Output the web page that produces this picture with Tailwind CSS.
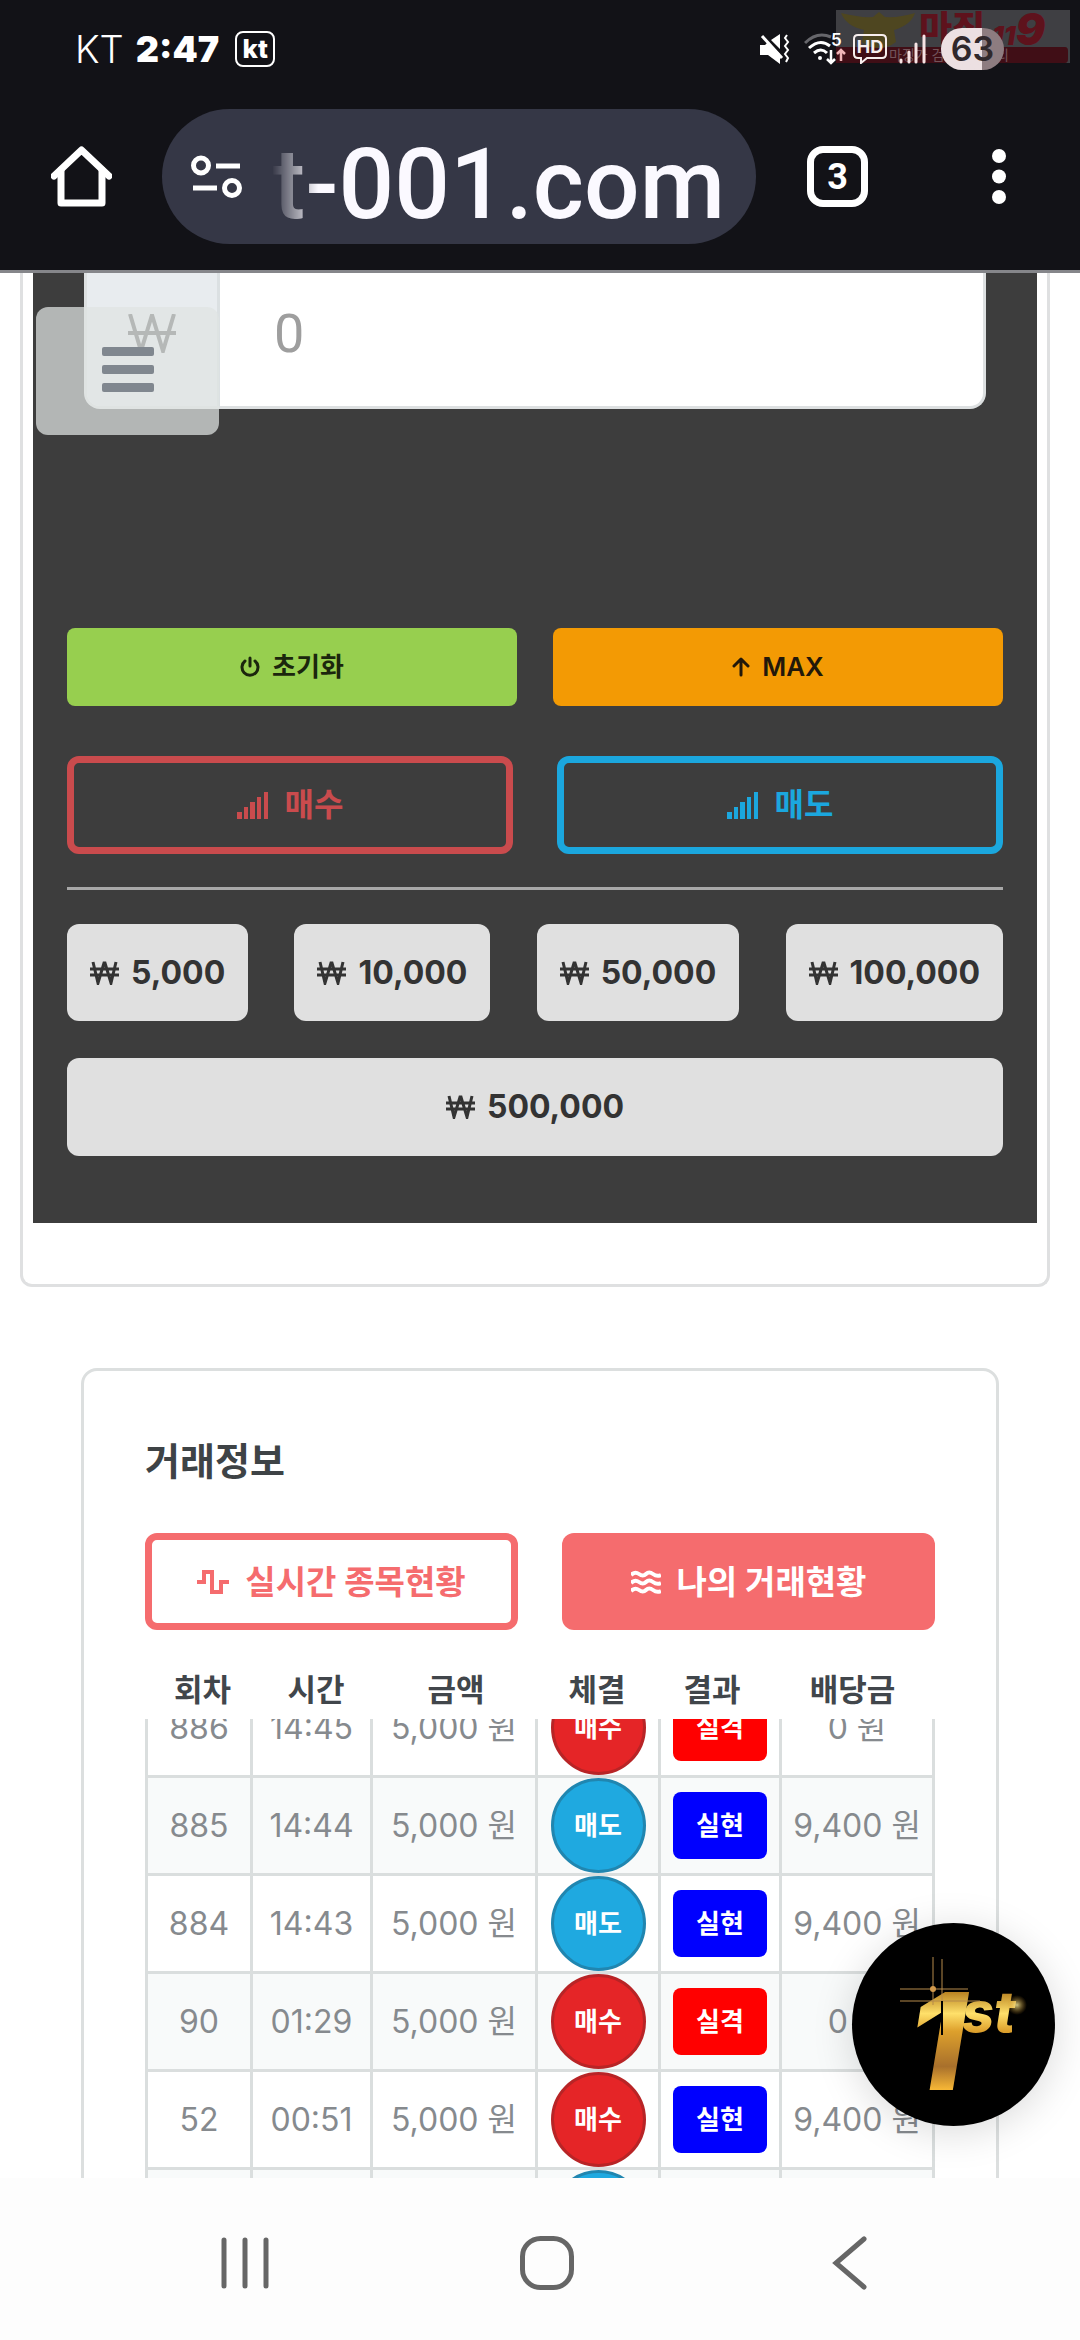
<!DOCTYPE html>
<html lang="ko">
<head>
    <meta charset="UTF-8">
    <meta name="viewport" content="width=device-width, initial-scale=1.0">
    <title>거래정보</title>
    <script src="https://cdn.jsdelivr.net/npm/@tailwindcss/browser@4"></script>
    <style>
        body { font-family: 'Inter', 'Noto Sans CJK KR', sans-serif; }
    </style>
</head>
<body class="bg-white h-screen flex flex-col overflow-hidden">

    <!-- Status bar + browser toolbar -->
    <header class="relative shrink-0 bg-[#121217] border-b-3 border-[#85868a] text-white">
        <!-- Banner watermark behind the status icons -->
        <div class="absolute top-2.5 right-2.5 w-[234px] h-[53px] pointer-events-none">
            <svg class="w-full h-full" viewBox="0 0 234 53">
                <path d="M0 0h234v53H0z" fill="#3f3f43"/>
                <path d="M0 37h229q3 0 3 4v8q0 4-3 4H0z" fill="#400e16"/>
                <path d="M5 3q20 5 32 4l6-5 6 5q14 1 30-4-4 12-21 17l2 12q-8 6-17 6t-17-6l2-12Q10 16 5 3z" fill="#4e4620"/>
                <g fill="#5e121c" font-weight="900">
                    <text x="83" y="32" font-size="36">마징</text>
                    <text x="156" y="35" font-size="26" font-style="italic">11<tspan font-size="44">9</tspan></text>
                </g>
                <text x="53" y="50" font-size="14" fill="#73545a">마징가 검증커뮤니티</text>
            </svg>
        </div>

        <div class="relative h-[98px] pl-[75px] pr-[76px] flex items-center">
            <span class="text-[38px] font-light">KT</span>
            <span class="ml-3 text-[36px] font-black">2:47</span>
            <span class="ml-4 w-10 h-9 border-2 rounded-lg flex items-center justify-center text-[26px] leading-none font-extrabold">kt</span>
            <div class="ml-auto flex items-center">
                <svg class="w-[30px] h-[30px]" viewBox="0 0 30 30" fill="none" stroke="#fff">
                    <path d="M0 11h5l3-3 12 12v10L8 21H0zM11 6l9-6v15z" fill="#fff" stroke="none"/>
                    <path d="M2 2l20 22" stroke-width="3"/>
                    <path d="M27 1l-2 3 3 4-3 4 3 4-3 4 3 4-2 4" stroke-width="2"/>
                </svg>
                <svg class="ml-3.5 w-[42px] h-[32px]" viewBox="0 0 42 32" fill="none" stroke="#fff" stroke-width="3">
                    <path d="M1 10Q13-2 27 4" stroke="#66666b"/>
                    <path d="M5 15q11-10 21-2M10 20q7-6 13 0"/>
                    <circle cx="16" cy="25" r="2" fill="#fff" stroke="none"/>
                    <path d="M27 17v13M23 26l4 4 4-4" stroke-width="2.5"/>
                    <path d="M37 28V17M33 21l4-4 4 4" stroke="#f0b5b8" stroke-width="2.5"/>
                    <text x="27" y="13" font-size="17" font-weight="600" fill="#fff" stroke="none">5</text>
                </svg>
                <svg class="ml-[7px] w-[34px] h-[30px]" viewBox="0 0 34 30" fill="none" stroke="#f7eeee" stroke-width="2">
                    <path d="M5 1h24q4 0 4 4v15q0 4-4 4H14l-6 5v-5H5q-4 0-4-4V5q0-4 4-4z"/>
                    <text x="17" y="19" text-anchor="middle" font-size="18" font-weight="700" fill="#f7eeee" stroke="none">HD</text>
                </svg>
                <svg class="ml-3 w-[27px] h-[30px]" viewBox="0 0 27 30" stroke="#f7e3e4" stroke-width="3" stroke-linecap="round">
                    <path d="M2 26v2M10 18v10M17 10v18M25 2v26"/>
                </svg>
                <span class="ml-[15px] w-[63px] h-[42px] rounded-full bg-linear-to-r from-[#ece0e2] from-65% to-[#8d7c80] to-65% flex items-center justify-center text-[34px] leading-none font-semibold text-[#30282c]">63</span>
            </div>
        </div>

        <div class="pl-[51px] pr-[74px] pt-[11px] pb-[26px] flex items-center">
            <button type="button" aria-label="홈">
                <svg class="w-[61px] h-[61px]" viewBox="0 0 61 61" fill="none" stroke="#fff" stroke-width="7" stroke-linejoin="round" stroke-linecap="round">
                    <path d="M3 30L30.500 4 58 30"/>
                    <path d="M10 24v33h41V24"/>
                </svg>
            </button>
            <div class="ml-[50px] flex-1 min-w-0 h-[135px] rounded-full bg-[#353746] pl-[29px] pr-[31px] flex items-center">
                <button type="button" aria-label="사이트 정보" class="shrink-0">
                    <svg class="w-[51px] h-[44px]" viewBox="0 0 51 44" fill="none" stroke="#fff" stroke-width="5">
                        <circle cx="10" cy="10.500" r="7.500"/>
                        <circle cx="41" cy="33" r="7.500"/>
                        <path d="M25 11h24M2 33h24"/>
                    </svg>
                </button>
                <input type="text" dir="rtl" aria-label="주소창" value="st-001.com" class="ml-[30px] flex-1 min-w-0 h-[135px] pt-4 text-[98px] font-[Roboto] font-medium text-[#fbf9ff] outline-none [mask-image:linear-gradient(to_right,transparent,black_46px)]">
            </div>
            <button type="button" aria-label="탭" class="ml-[51px] w-[61px] h-[61px] border-7 rounded-2xl flex items-center justify-center text-[36px] leading-none font-[Roboto] font-bold">3</button>
            <button type="button" aria-label="메뉴" class="ml-[124px]">
                <svg class="w-3.5 h-[55px]" viewBox="0 0 14 55" fill="#fff">
                    <circle cx="7" cy="7" r="7"/>
                    <circle cx="7" cy="27.500" r="7"/>
                    <circle cx="7" cy="48" r="7"/>
                </svg>
            </button>
        </div>
    </header>

    <main class="relative flex-1 min-h-0 overflow-hidden">

        <!-- Order card -->
        <section class="ml-5 mr-[30px] border-3 border-t-0 border-[#dfe0e1] rounded-b-xl bg-white px-2.5 pb-[61px]">
            <div class="bg-[#3d3d3d] px-[34px] pb-[67px]">
                <div class="mx-[17px] h-[136px] flex border-3 border-t-0 border-[#dde0e1] rounded-b-2xl overflow-hidden bg-white">
                    <label for="amount" class="w-[133px] shrink-0 bg-[#e8ecef] border-r-3 border-[#dbe0e2] flex items-center justify-center pb-3 text-[#444]">
                        <svg class="w-12 h-[39px]" viewBox="0 0 48 39" fill="none" stroke="currentColor" stroke-width="4" aria-label="₩">
                            <path d="M2 0l11 37L24 1l11 36L46 0M0 19h48"/>
                        </svg>
                    </label>
                    <input id="amount" type="text" placeholder="0" class="flex-1 min-w-0 pl-[54px] pb-3 text-[54px] font-[Roboto] placeholder-[#9e9e9e] outline-none">
                </div>

                <div class="mt-[219px] grid grid-cols-2 gap-9 text-[26px] leading-[38px] font-semibold">
                    <button type="button" class="h-[78px] rounded-lg bg-[#97cf4f] text-[#1b260d] flex items-center justify-center gap-3">
                        <svg class="w-5 h-[22px]" viewBox="0 0 20 22" fill="none" stroke="currentColor" stroke-width="3" stroke-linecap="round">
                            <path d="M10 2v8M5 5a8 8 0 1 0 10 0"/>
                        </svg>
                        초기화
                    </button>
                    <button type="button" class="h-[78px] rounded-lg bg-[#f39a04] text-[#22180a] flex items-center justify-center gap-3">
                        <svg class="w-[18px] h-5" viewBox="0 0 18 20" fill="none" stroke="currentColor" stroke-width="3" stroke-linecap="round" stroke-linejoin="round">
                            <path d="M9 18V3M2 9l7-7 7 7"/>
                        </svg>
                        MAX
                    </button>
                </div>

                <div class="mt-[50px] grid grid-cols-2 gap-11 text-[32px] leading-[44px] font-bold">
                    <button type="button" class="h-[98px] border-7 border-[#ca4b4d] rounded-xl text-[#ca4b4d] flex items-center justify-center gap-4">
                        <svg class="w-8 h-7" viewBox="0 0 32 28" fill="currentColor">
                            <path d="M0 21h5v7H0zM7 16h4v12H7zM13 11h5v17h-5zM20 6h4v22h-4zM27 1h4v27h-4z"/>
                        </svg>
                        매수
                    </button>
                    <button type="button" class="h-[98px] border-7 border-[#1ba7de] rounded-xl text-[#1ba7de] flex items-center justify-center gap-4">
                        <svg class="w-8 h-7" viewBox="0 0 32 28" fill="currentColor">
                            <path d="M0 21h5v7H0zM7 16h4v12H7zM13 11h5v17h-5zM20 6h4v22h-4zM27 1h4v27h-4z"/>
                        </svg>
                        매도
                    </button>
                </div>

                <hr class="mt-[33px] border-t-3 border-[#a8a8a8]">

                <svg class="hidden">
                    <symbol id="won" viewBox="0 0 29 24">
                        <path d="M3 1l5 21 6-20h1l6 20 5-21M0 8h29M0 14h29" fill="none" stroke="currentColor" stroke-width="3"/>
                    </symbol>
                </svg>
                <div class="mt-[34px] flex justify-between text-[32px] leading-[44px] font-bold text-[#333]">
                    <button type="button" class="h-[97px] px-[23px] rounded-xl bg-[#e0e0e0] flex items-center gap-3"><svg class="w-[29px] h-6"><use href="#won"/></svg>5,000</button>
                    <button type="button" class="h-[97px] px-[23px] rounded-xl bg-[#e0e0e0] flex items-center gap-3"><svg class="w-[29px] h-6"><use href="#won"/></svg>10,000</button>
                    <button type="button" class="h-[97px] px-[23px] rounded-xl bg-[#e0e0e0] flex items-center gap-3"><svg class="w-[29px] h-6"><use href="#won"/></svg>50,000</button>
                    <button type="button" class="h-[97px] px-[23px] rounded-xl bg-[#e0e0e0] flex items-center gap-3"><svg class="w-[29px] h-6"><use href="#won"/></svg>100,000</button>
                </div>
                <button type="button" class="mt-[37px] w-full h-[98px] rounded-xl bg-[#e0e0e0] flex items-center justify-center gap-3 text-[32px] leading-[44px] font-bold text-[#333]"><svg class="w-[29px] h-6"><use href="#won"/></svg>500,000</button>
            </div>
        </section>

        <!-- Trade info card -->
        <section class="mt-[81px] mx-[81px] border-3 border-[#dcdfdf] rounded-2xl bg-white px-[61px] pt-[62px] pb-[61px]">
            <h2 class="text-[38px] leading-[56px] font-bold text-[#3e4346]">거래정보</h2>

            <div class="mt-11 grid grid-cols-2 gap-11 text-[33px] leading-[44px] font-bold">
                <button type="button" class="h-[97px] border-7 border-[#f56c6e] rounded-xl text-[#f56c6e] flex items-center justify-center gap-4">
                    <svg class="w-8 h-6" viewBox="0 0 32 24" fill="none" stroke="currentColor" stroke-width="4">
                        <path d="M0 12h7V2h8v20h9V12h8"/>
                    </svg>
                    실시간 종목현황
                </button>
                <button type="button" class="h-[97px] rounded-xl bg-[#f56c6e] text-white flex items-center justify-center gap-4">
                    <svg class="w-[30px] h-6" viewBox="0 0 30 24" fill="none" stroke="currentColor" stroke-width="4">
                        <path d="M0 5q4-4 8-1t7 0 7 0 8 1M0 13q4-4 8-1t7 0 7 0 8 1M0 21q4-4 8-1t7 0 7 0 8 1"/>
                    </svg>
                    나의 거래현황
                </button>
            </div>

            <table class="mt-9 w-full table-fixed text-[31px] leading-[48px] text-[#41464b]">
                <colgroup>
                    <col class="w-[115px]"><col class="w-[112px]"><col class="w-[168px]"><col class="w-[114px]"><col class="w-[116px]"><col class="w-[165px]">
                </colgroup>
                <thead>
                    <tr>
                        <th class="font-semibold">회차</th>
                        <th class="font-semibold">시간</th>
                        <th class="font-semibold">금액</th>
                        <th class="font-semibold">체결</th>
                        <th class="font-semibold">결과</th>
                        <th class="font-semibold">배당금</th>
                    </tr>
                </thead>
            </table>

            <div class="mt-[5px] overflow-hidden">
                <!-- list is scrolled partway through its first row -->
                <table class="-mt-[39px] w-full table-fixed border-separate border-spacing-0 border-l-3 border-[#dadede] text-center text-[32px] leading-[44px] text-[#868a8e]">
                    <colgroup>
                        <col class="w-[105px]"><col class="w-[120px]"><col class="w-[165px]"><col class="w-[123px]"><col class="w-[121px]"><col class="w-[153px]">
                    </colgroup>
                    <tbody id="trades" class="[&_td]:h-[98px] [&_td]:border-r-3 [&_td]:border-b-3 [&_td]:border-[#dadede] [&_td]:whitespace-nowrap [&>tr:nth-child(even)]:bg-[#f8fafa]"></tbody>
                </table>
            </div>
        </section>

        <!-- Floating menu toggle -->
        <button type="button" aria-label="메뉴 열기" class="absolute top-[34px] left-9 w-[183px] h-32 pb-1 rounded-xl bg-[#dfe3e2]/73">
            <span class="ml-[66px] flex flex-col gap-[9px]">
                <span class="w-[52px] h-[9px] rounded-xs bg-[#80878f]"></span>
                <span class="w-[52px] h-[9px] rounded-xs bg-[#80878f]"></span>
                <span class="w-[52px] h-[9px] rounded-xs bg-[#80878f]"></span>
            </span>
        </button>

        <!-- Floating 1st logo -->
        <a href="#" aria-label="1st" class="absolute right-[25px] bottom-[52px] w-[203px] h-[203px] rounded-full bg-black shadow-[0_6px_40px_rgba(0,0,0,0.15)]">
            <svg class="w-full h-full" viewBox="0 0 203 203">
                <defs>
                    <linearGradient id="gold" gradientUnits="userSpaceOnUse" x1="0" y1="69" x2="0" y2="167">
                        <stop offset="0" stop-color="#b98322"/>
                        <stop offset=".22" stop-color="#ffe06a"/>
                        <stop offset=".4" stop-color="#dda02c"/>
                        <stop offset=".76" stop-color="#a8702c"/>
                        <stop offset="1" stop-color="#f8b836"/>
                    </linearGradient>
                    <radialGradient id="glow">
                        <stop offset="0" stop-color="#fff3a0"/>
                        <stop offset="1" stop-color="#c98a1a" stop-opacity="0"/>
                    </radialGradient>
                </defs>
                <g font-style="italic" font-weight="800" fill="url(#gold)">
                    <text x="55" y="167" font-size="135">1</text>
                    <text x="110" y="109" font-size="56">st</text>
                </g>
                <path d="M81 34v48M90 36v42M48 66h68M48 78h80" stroke="#b58a4a" stroke-width="1"/>
                <path d="M90 78v34" stroke="#000" stroke-width="2"/>
                <circle cx="81" cy="66" r="3" fill="#d39a4c"/>
                <circle cx="165" cy="82" r="10" fill="url(#glow)" opacity=".8"/>
            </svg>
        </a>
    </main>

    <!-- System navigation -->
    <nav class="shrink-0 h-[162px] pt-[7px] pl-[220px] pr-[213px] flex items-center justify-between text-[#666] bg-[#fdfdfd]">
        <button type="button" aria-label="최근 앱">
            <svg class="w-[50px] h-[54px]" viewBox="0 0 50 54" stroke="currentColor" stroke-width="5" stroke-linecap="round">
                <path d="M4 4v46M25 4v46M46 4v46"/>
            </svg>
        </button>
        <button type="button" aria-label="홈 화면">
            <svg class="w-[54px] h-[54px]" viewBox="0 0 54 54" fill="none" stroke="currentColor" stroke-width="5">
                <rect x="2.500" y="2.500" width="49" height="49" rx="18"/>
            </svg>
        </button>
        <button type="button" aria-label="뒤로">
            <svg class="w-[43px] h-[54px]" viewBox="0 0 43 54" fill="none" stroke="currentColor" stroke-width="5" stroke-linecap="round">
                <path d="M40 3L12 27l28 24"/>
            </svg>
        </button>
    </nav>

    <script>
        const trades = [
            ['886', '14:45', '5,000 원', '매수', '실격', '0 원'],
            ['885', '14:44', '5,000 원', '매도', '실현', '9,400 원'],
            ['884', '14:43', '5,000 원', '매도', '실현', '9,400 원'],
            ['90', '01:29', '5,000 원', '매수', '실격', '0 원'],
            ['52', '00:51', '5,000 원', '매수', '실현', '9,400 원'],
            ['51', '00:50', '5,000 원', '매도', '실현', '9,400 원'],
        ];
        const side = {
            '매수': 'bg-[#e52527] border-[#b82426]',
            '매도': 'bg-[#1fa9e0] border-[#2086b0]',
        };
        const result = { '실격': 'bg-[#ff0000]', '실현': 'bg-[#0000ff]' };

        document.getElementById('trades').innerHTML = trades.map(([round, time, amount, type, state, payout]) => `
            <tr>
                <td>${round}</td>
                <td>${time}</td>
                <td>${amount}</td>
                <td><span class="mx-auto w-[95px] h-[95px] rounded-full border-3 flex items-center justify-center text-[26px] font-bold text-white ${side[type]}">${type}</span></td>
                <td><span class="mx-auto w-[94px] h-[67px] rounded-lg flex items-center justify-center text-[26px] font-bold text-white ${result[state]}">${state}</span></td>
                <td>${payout}</td>
            </tr>`).join('');
    </script>
</body>
</html>
